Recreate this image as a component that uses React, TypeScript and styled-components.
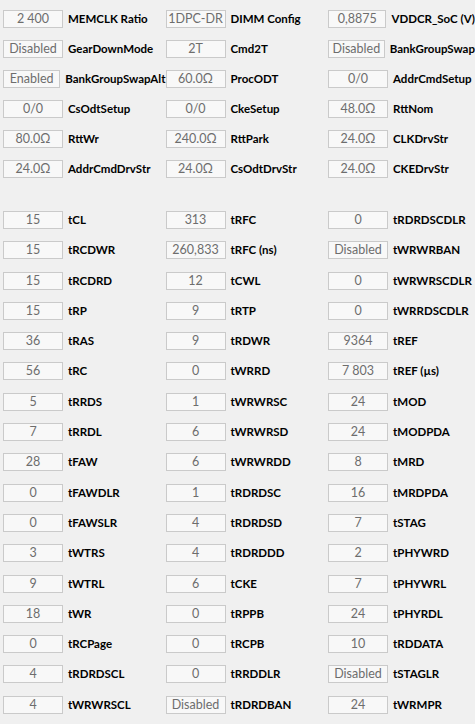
import styled, { createGlobalStyle } from "styled-components";

const GlobalStyle = createGlobalStyle`
  html, body {
    margin: 0;
    padding: 0;
    background: #f0f0f0;
  }
`

type Field = [string, string]

const general: Field[][] = [
  [['2 400', 'MEMCLK Ratio'], ['1DPC-DR', 'DIMM Config'], ['0,8875', 'VDDCR_SoC (V)']],
  [['Disabled', 'GearDownMode'], ['2T', 'Cmd2T'], ['Disabled', 'BankGroupSwap']],
  [['Enabled', 'BankGroupSwapAlt'], ['60.0Ω', 'ProcODT'], ['0/0', 'AddrCmdSetup']],
  [['0/0', 'CsOdtSetup'], ['0/0', 'CkeSetup'], ['48.0Ω', 'RttNom']],
  [['80.0Ω', 'RttWr'], ['240.0Ω', 'RttPark'], ['24.0Ω', 'CLKDrvStr']],
  [['24.0Ω', 'AddrCmdDrvStr'], ['24.0Ω', 'CsOdtDrvStr'], ['24.0Ω', 'CKEDrvStr']],
]

const timings: Field[][] = [
  [['15', 'tCL'], ['313', 'tRFC'], ['0', 'tRDRDSCDLR']],
  [['15', 'tRCDWR'], ['260,833', 'tRFC (ns)'], ['Disabled', 'tWRWRBAN']],
  [['15', 'tRCDRD'], ['12', 'tCWL'], ['0', 'tWRWRSCDLR']],
  [['15', 'tRP'], ['9', 'tRTP'], ['0', 'tWRRDSCDLR']],
  [['36', 'tRAS'], ['9', 'tRDWR'], ['9364', 'tREF']],
  [['56', 'tRC'], ['0', 'tWRRD'], ['7 803', 'tREF (µs)']],
  [['5', 'tRRDS'], ['1', 'tWRWRSC'], ['24', 'tMOD']],
  [['7', 'tRRDL'], ['6', 'tWRWRSD'], ['24', 'tMODPDA']],
  [['28', 'tFAW'], ['6', 'tWRWRDD'], ['8', 'tMRD']],
  [['0', 'tFAWDLR'], ['1', 'tRDRDSC'], ['16', 'tMRDPDA']],
  [['0', 'tFAWSLR'], ['4', 'tRDRDSD'], ['7', 'tSTAG']],
  [['3', 'tWTRS'], ['4', 'tRDRDDD'], ['2', 'tPHYWRD']],
  [['9', 'tWTRL'], ['6', 'tCKE'], ['7', 'tPHYWRL']],
  [['18', 'tWR'], ['0', 'tRPPB'], ['24', 'tPHYRDL']],
  [['0', 'tRCPage'], ['0', 'tRCPB'], ['10', 'tRDDATA']],
  [['4', 'tRDRDSCL'], ['0', 'tRRDDLR'], ['Disabled', 'tSTAGLR']],
  [['4', 'tWRWRSCL'], ['Disabled', 'tRDRDBAN'], ['24', 'tWRMPR']],
]

const App = () => {
  return (
    <Page>
      <GlobalStyle/>
      <Section $rowHeight={30}>
        {general.flat().map(([value, label]) => (
          <Item key={label}>
            <ValueBox>{value}</ValueBox>
            <Label>{label}</Label>
          </Item>
        ))}
      </Section>
      <Section $rowHeight={30.31} $gapTop={21}>
        {timings.flat().map(([value, label]) => (
          <Item key={label}>
            <ValueBox>{value}</ValueBox>
            <Label>{label}</Label>
          </Item>
        ))}
      </Section>
    </Page>
  )
}

const Page = styled.div`
  width: 475px;
  height: 724px;
  box-sizing: border-box;
  padding: 10px 0 0 3px;
  background: #f0f0f0;
  overflow: hidden;
`

const Section = styled.div<{ $rowHeight: number, $gapTop?: number }>`
  display: grid;
  grid-template-columns: 162.5px 162.5px 147px;
  grid-auto-rows: ${p => p.$rowHeight}px;
  margin-top: ${p => p.$gapTop ?? 0}px;
`

const Item = styled.div`
  display: flex;
  align-items: flex-start;
  gap: 5px;
`

const ValueBox = styled.div`
  width: 60px;
  height: 18px;
  box-sizing: border-box;
  border: 1px solid #cacaca;
  background: #f8f8f8;
  color: #6d6d6d;
  font-family: Lato, 'Liberation Sans', sans-serif;
  font-size: 12.5px;
  line-height: 16px;
  text-align: center;
  white-space: nowrap;
  overflow: hidden;
`

const Label = styled.div`
  height: 18px;
  line-height: 18px;
  font-family: Lato, 'Liberation Sans', sans-serif;
  font-weight: 700;
  font-size: 11.5px;
  color: #000;
  white-space: nowrap;
`

export default App
